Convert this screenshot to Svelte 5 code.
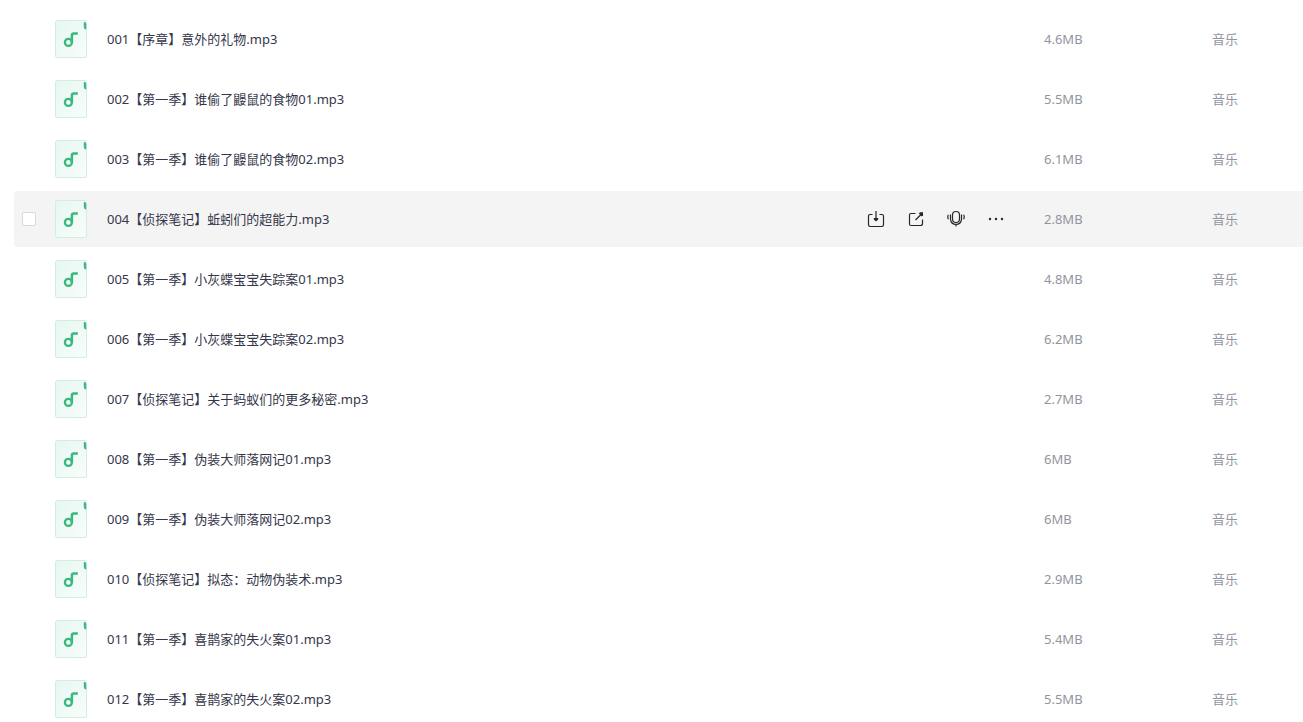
<script>
  const files = [
    { name: '001【序章】意外的礼物.mp3', size: '4.6MB' },
    { name: '002【第一季】谁偷了鼹鼠的食物01.mp3', size: '5.5MB' },
    { name: '003【第一季】谁偷了鼹鼠的食物02.mp3', size: '6.1MB' },
    { name: '004【侦探笔记】蚯蚓们的超能力.mp3', size: '2.8MB', active: true },
    { name: '005【第一季】小灰蝶宝宝失踪案01.mp3', size: '4.8MB' },
    { name: '006【第一季】小灰蝶宝宝失踪案02.mp3', size: '6.2MB' },
    { name: '007【侦探笔记】关于蚂蚁们的更多秘密.mp3', size: '2.7MB' },
    { name: '008【第一季】伪装大师落网记01.mp3', size: '6MB' },
    { name: '009【第一季】伪装大师落网记02.mp3', size: '6MB' },
    { name: '010【侦探笔记】拟态：动物伪装术.mp3', size: '2.9MB' },
    { name: '011【第一季】喜鹊家的失火案01.mp3', size: '5.4MB' },
    { name: '012【第一季】喜鹊家的失火案02.mp3', size: '5.5MB' }
  ];
</script>

<main>
  <table>
    <colgroup>
      <col class="col-check" />
      <col />
      <col class="col-size" />
      <col class="col-type" />
    </colgroup>
    <tbody>
      {#each files as file}
        <tr class:active={file.active}>
          <td class="check">
            {#if file.active}
              <input type="checkbox" aria-label={file.name} />
            {/if}
          </td>
          <td>
            <div class="name">
              <svg class="file" viewBox="0 0 32 38" aria-hidden="true">
                <defs>
                  <linearGradient id="paper" x1="0" y1="0" x2="1" y2="1">
                    <stop offset="0" stop-color="#e6f7f0" />
                    <stop offset="1" stop-color="#f8fdfb" />
                  </linearGradient>
                </defs>
                <rect x=".5" y=".5" width="31" height="37" rx="1.5" fill="url(#paper)" stroke="#d3ede1" />
                <path d="M28.8 2H29.6Q31.2 2.4 31.2 4V9.8Q28.8 9 28.8 7Z" fill="#3bb87f" />
                <circle cx="13.4" cy="22.4" r="3.5" fill="none" stroke="#3bb87f" stroke-width="2.3" />
                <path d="M16.9 22.4V15.6Q16.9 13.6 18.9 13.6H22.8" fill="none" stroke="#3bb87f" stroke-width="2.5" />
              </svg>
              <a href="#file">{file.name}</a>
              {#if file.active}
                <div class="actions">
                  <button aria-label="下载">
                    <svg viewBox="0 0 18 18">
                      <path d="M5.5 4.5H3.2Q1.5 4.5 1.5 6.2V14.8Q1.5 16.5 3.2 16.5H14.8Q16.5 16.5 16.5 14.8V6.2Q16.5 4.5 14.8 4.5H12.5M9 1V10" />
                      <path class="solid" d="M6.8 8H11.2V9.4L9 11.6L6.8 9.4Z" />
                    </svg>
                  </button>
                  <button aria-label="分享">
                    <svg viewBox="0 0 18 18">
                      <path d="M8.5 3.5H4Q2.5 3.5 2.5 5V14Q2.5 15.5 4 15.5H13.5Q15.5 15.5 15.5 13.5V9.5M8.5 10L14.5 4" />
                      <path class="solid" d="M11.8 3.4L13 2.2H16V5.2L14.8 6.4Z" />
                    </svg>
                  </button>
                  <button aria-label="语音">
                    <svg viewBox="0 0 18 18">
                      <rect x="5.5" y="1.5" width="7" height="11" rx="3.5" />
                      <path d="M3.5 4.4V9.4Q4.2 14.4 9 14.4Q13.8 14.4 14.5 9.4V4.4M9 14.4V16.4M1.4 4.8Q.2 7 1.4 9.3M16.6 4.8Q17.8 7 16.6 9.3" />
                    </svg>
                  </button>
                  <button aria-label="更多">
                    <svg viewBox="0 0 18 18">
                      <circle class="solid" cx="3" cy="9" r="1.2" />
                      <circle class="solid" cx="9" cy="9" r="1.2" />
                      <circle class="solid" cx="15" cy="9" r="1.2" />
                    </svg>
                  </button>
                </div>
              {/if}
            </div>
          </td>
          <td class="meta">{file.size}</td>
          <td class="meta">音乐</td>
        </tr>
      {/each}
    </tbody>
  </table>
</main>

<style>
  :global(body) {
    margin: 0;
    background: #fff;
  }
  main {
    box-sizing: border-box;
    height: 100vh;
    overflow: hidden;
    padding: 7px 0 0 14px;
    font: 13px/20px "Noto Sans", "Noto Sans CJK SC", sans-serif;
  }
  table {
    width: 100%;
    table-layout: fixed;
    border-collapse: separate;
    border-spacing: 0 4px;
  }
  .col-check {
    width: 41px;
  }
  .col-size {
    width: 168px;
  }
  .col-type {
    width: 99px;
  }
  tr {
    height: 56px;
  }
  td {
    padding: 0;
    vertical-align: middle;
  }
  .active td {
    background: #f4f4f4;
  }
  .active td:first-child {
    border-radius: 4px 0 0 4px;
  }
  .check {
    padding-left: 8px;
  }
  input {
    appearance: none;
    display: block;
    box-sizing: border-box;
    width: 14px;
    height: 14px;
    margin: 0;
    border: 1px solid #d9d9dc;
    border-radius: 2px;
    background: #fff;
  }
  .name {
    display: flex;
    align-items: center;
  }
  .file {
    flex: none;
    width: 32px;
    height: 38px;
    margin-right: 20px;
  }
  a {
    flex: 1;
    color: #34374a;
    text-decoration: none;
    white-space: nowrap;
  }
  .actions {
    display: flex;
    gap: 22px;
    padding-right: 31px;
  }
  button {
    display: block;
    width: 18px;
    height: 18px;
    padding: 0;
    border: 0;
    background: none;
  }
  button svg {
    display: block;
    width: 18px;
    height: 18px;
    fill: none;
    stroke: #25262b;
    stroke-width: 1.2;
  }
  button svg .solid {
    fill: #25262b;
    stroke: none;
  }
  .meta {
    padding-left: 8px;
    color: #92949e;
  }
</style>
